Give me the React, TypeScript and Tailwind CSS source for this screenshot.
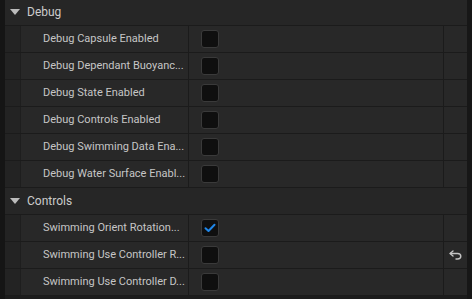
const debugRows = [
  "Debug Capsule Enabled",
  "Debug Dependant Buoyanc...",
  "Debug State Enabled",
  "Debug Controls Enabled",
  "Debug Swimming Data Ena...",
  "Debug Water Surface Enabl...",
];

const controlRows = [
  { label: "Swimming Orient Rotation...", checked: true, reset: false },
  { label: "Swimming Use Controller R...", checked: false, reset: true },
  { label: "Swimming Use Controller D...", checked: false, reset: false },
];

function Checkbox({ checked }: { checked?: boolean }) {
  return (
    <div className="w-[18px] h-[18px] rounded-[3px] bg-[#0f0f0f] border border-[#3a3a3a] flex items-center justify-center">
      {checked && (
        <svg width="12" height="10" viewBox="0 0 12 10" fill="none">
          <path d="M1.5 5.2L4.5 8L10.5 1.8" stroke="#1f86e8" strokeWidth="2" strokeLinecap="round" strokeLinejoin="round" />
        </svg>
      )}
    </div>
  );
}

function ResetIcon() {
  return (
    <svg width="13" height="10" viewBox="0 0 13 10" fill="none">
      <path d="M4 1L1 3.5L4 6" stroke="#c4c4c4" strokeWidth="1.4" strokeLinecap="round" strokeLinejoin="round" />
      <path d="M1.5 3.5H8.5C10.4 3.5 11.8 4.7 11.8 6.3C11.8 7.9 10.4 9 8.5 9H7" stroke="#c4c4c4" strokeWidth="1.4" strokeLinecap="round" />
    </svg>
  );
}

function Category({ title }: { title: string }) {
  return (
    <div className="flex items-center h-[27px] bg-[#262626] border-b border-[#1b1b1b] pl-[5px]">
      <svg width="10" height="6" viewBox="0 0 10 6" className="mr-[7px] shrink-0">
        <path d="M0 0H10L5 6Z" fill="#bcbcbc" />
      </svg>
      <span className="text-[12px] text-[#cccccc]">{title}</span>
    </div>
  );
}

function Row({ label, checked, reset }: { label: string; checked?: boolean; reset?: boolean }) {
  return (
    <div className="flex h-[27px] border-b border-[#1b1b1b]">
      <div className="w-[16px] bg-[#232323] border-r border-[#1e1e1e]" />
      <div className="w-[168px] flex items-center pl-[22px] bg-[#282828] border-r border-[#1b1b1b] text-[11px] text-[#c6c6c6] whitespace-nowrap overflow-hidden">
        {label}
      </div>
      <div className="flex-1 flex items-center pl-[12px] bg-[#282828] border-r border-[#1b1b1b]">
        <Checkbox checked={checked} />
      </div>
      <div className="w-[23px] flex items-center justify-center bg-[#282828]">
        {reset && <ResetIcon />}
      </div>
    </div>
  );
}

export default function App() {
  return (
    <div className="w-[472px] h-[299px] bg-[#1c1c1c] flex overflow-hidden" style={{ fontFamily: "Roboto, 'Liberation Sans', sans-serif" }}>
      <div className="w-[5px] bg-[#151515]" />
      <div className="flex-1 flex flex-col">
        <div className="-mt-[1px]">
          <Category title="Debug" />
        </div>
        {debugRows.map((r) => (
          <Row key={r} label={r} />
        ))}
        <Category title="Controls" />
        {controlRows.map((r) => (
          <Row key={r.label} label={r.label} checked={r.checked} reset={r.reset} />
        ))}
      </div>
      <div className="w-[5px] bg-[#171717]" />
    </div>
  );
}
